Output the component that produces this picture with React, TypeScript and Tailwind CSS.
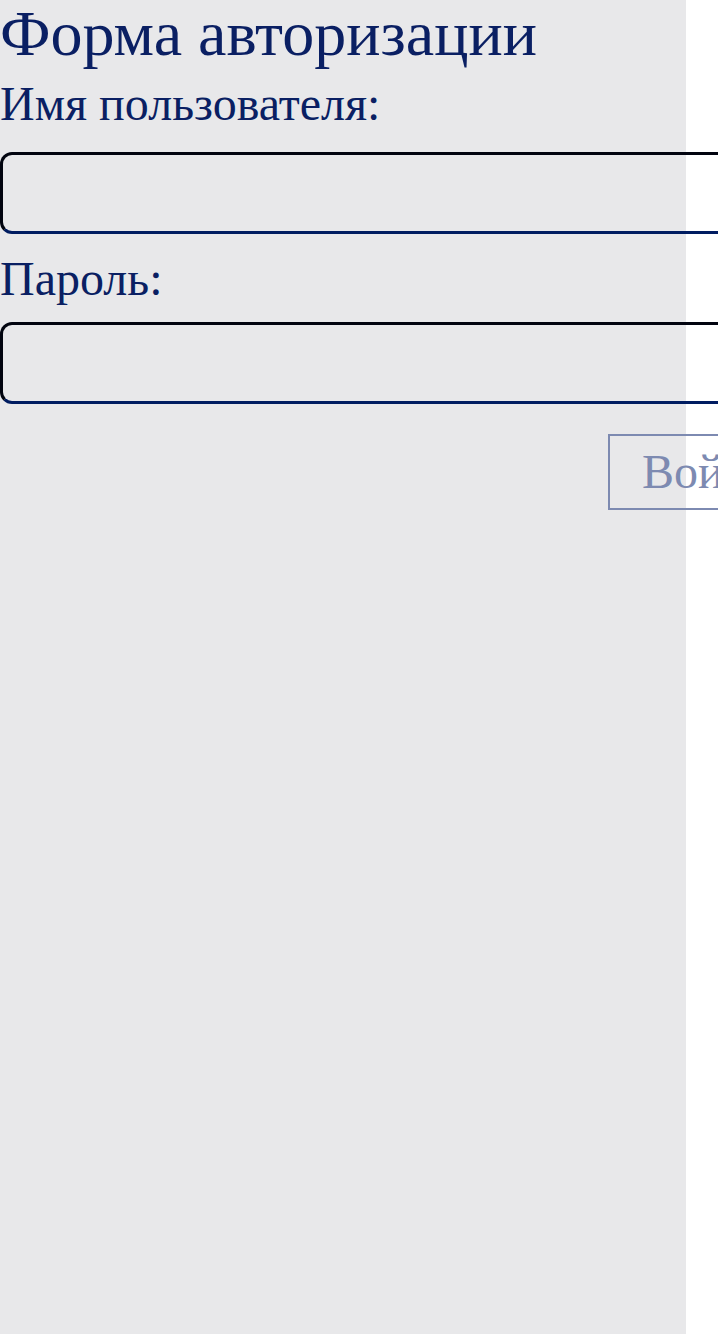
export default function App() {
  return (
    <div className="min-h-screen w-[718px] overflow-hidden bg-white font-['Liberation_Serif',serif] text-[#0a1f63]">
      <div className="min-h-[1334px] w-[686px] bg-[#e8e8ea]">
        <h1 className="mb-[10px] text-[64px] font-normal leading-[68px]">Форма авторизации</h1>

        <form className="flex flex-col">
          <label htmlFor="username" className="text-[48px] leading-[52px]">
            Имя пользователя:
          </label>
          <input
            id="username"
            type="text"
            className="mt-[22px] h-[82px] w-[780px] shrink-0 rounded-[12px] border-[3px] border-t-[#01040f] border-l-[#01040f] border-r-[#01040f] border-b-[#001c61] bg-transparent"
          />

          <label htmlFor="password" className="mt-[19px] text-[48px] leading-[52px]">
            Пароль:
          </label>
          <input
            id="password"
            type="password"
            className="mt-[17px] h-[82px] w-[780px] shrink-0 rounded-[12px] border-[3px] border-t-[#01040f] border-l-[#01040f] border-r-[#01040f] border-b-[#001c61] bg-transparent"
          />

          <div className="mt-[30px] flex">
            <button
              type="submit"
              disabled
              className="ml-[608px] h-[76px] shrink-0 whitespace-nowrap border-2 border-[#7d8ab1] px-[32px] text-[48px] leading-none text-[#7d8ab1]"
            >
              Войти
            </button>
          </div>
        </form>
      </div>
    </div>
  )
}
